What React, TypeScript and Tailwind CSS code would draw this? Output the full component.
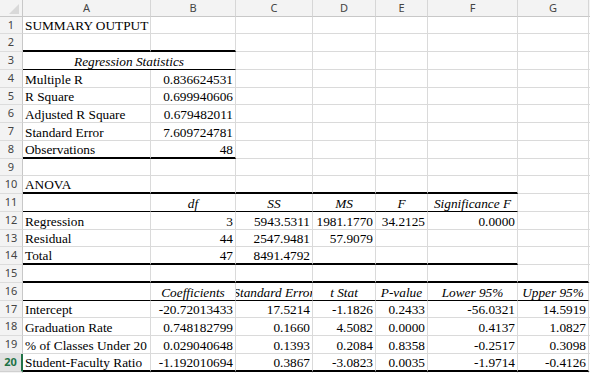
import React from "react";

type Align = "l" | "r" | "c";
type CellSpec = { t?: string; a?: Align; i?: boolean; span?: number };

const COLS = ["A", "B", "C", "D", "E", "F", "G"];

const lbl = (t: string): CellSpec => ({ t, a: "l" });
const num = (t: string): CellSpec => ({ t, a: "r" });
const hdr = (t: string): CellSpec => ({ t, a: "c", i: true });

// Cell contents per worksheet row (columns A..G)
const sheet: Record<number, CellSpec[]> = {
  1: [lbl("SUMMARY OUTPUT")],
  3: [{ t: "Regression Statistics", a: "c", i: true, span: 2 }],
  4: [lbl("Multiple R"), num("0.836624531")],
  5: [lbl("R Square"), num("0.699940606")],
  6: [lbl("Adjusted R Square"), num("0.679482011")],
  7: [lbl("Standard Error"), num("7.609724781")],
  8: [lbl("Observations"), num("48")],
  10: [lbl("ANOVA")],
  11: [{}, hdr("df"), hdr("SS"), hdr("MS"), hdr("F"), hdr("Significance F")],
  12: [lbl("Regression"), num("3"), num("5943.5311"), num("1981.1770"), num("34.2125"), num("0.0000")],
  13: [lbl("Residual"), num("44"), num("2547.9481"), num("57.9079")],
  14: [lbl("Total"), num("47"), num("8491.4792")],
  16: [{}, hdr("Coefficients"), hdr("Standard Error"), hdr("t Stat"), hdr("P-value"), hdr("Lower 95%"), hdr("Upper 95%")],
  17: [lbl("Intercept"), num("-20.72013433"), num("17.5214"), num("-1.1826"), num("0.2433"), num("-56.0321"), num("14.5919")],
  18: [lbl("Graduation Rate"), num("0.748182799"), num("0.1660"), num("4.5082"), num("0.0000"), num("0.4137"), num("1.0827")],
  19: [lbl("% of Classes Under 20"), num("0.029040648"), num("0.1393"), num("0.2084"), num("0.8358"), num("-0.2517"), num("0.3098")],
  20: [lbl("Student-Faculty Ratio"), num("-1.192010694"), num("0.3867"), num("-3.0823"), num("0.0035"), num("-1.9714"), num("-0.4126")],
};

// Bottom edge borders: [kind, number of columns from A]
const edges: Record<number, ["m" | "t", number]> = {
  2: ["m", 2],
  3: ["t", 2],
  8: ["m", 2],
  10: ["m", 6],
  11: ["t", 6],
  14: ["m", 6],
  15: ["m", 7],
  16: ["t", 7],
  20: ["m", 7],
};

function expand(row: number): CellSpec[] {
  const given = sheet[row] ?? [];
  const out: CellSpec[] = [];
  let used = 0;
  for (const c of given) {
    out.push(c);
    used += c.span ?? 1;
  }
  while (used < 7) {
    out.push({});
    used += 1;
  }
  return out;
}

function Cell({ spec, row, startCol }: { spec: CellSpec; row: number; startCol: number }) {
  const edge = edges[row];
  const kind = edge && startCol < edge[1] ? edge[0] : null;
  const bottom =
    kind === "m"
      ? "border-b-2 border-b-black"
      : kind === "t"
      ? "border-b border-b-black"
      : "border-b border-b-[#dadada]";
  const span = spec.span === 2 ? "col-span-2" : "";
  const justify =
    spec.a === "r" ? "justify-end pr-[2px]" : spec.a === "c" ? "justify-center" : "justify-start pl-[2px]";
  return (
    <div
      className={`${span} ${bottom} border-r border-r-[#dadada] bg-white flex items-end overflow-hidden whitespace-nowrap ${justify}`}
    >
      {spec.t ? (
        <span className={`shrink-0 leading-[15px] text-[13.3px] text-black ${spec.i ? "italic" : ""}`}>{spec.t}</span>
      ) : null}
    </div>
  );
}

export default function App() {
  const rows = Array.from({ length: 21 }, (_, k) => k + 1);
  return (
    <div className="w-[590px] h-[373px] overflow-hidden bg-white font-['Liberation_Serif',serif]">
      <div className="grid grid-cols-[23px_128px_85px_77px_63px_52px_90px_71px_1fr] grid-rows-[17px_17px_18px_18px_18px_17px_18px_18px_18px_17px_18px_18px_18px_17px_18px_18px_18px_17px_18px_18px_18px_18px]">
        {/* corner */}
        <div className="bg-[#f3f3f3] border-r border-r-[#c8c8c8] border-b border-b-[#c8c8c8] flex items-start justify-start">
          <svg width="22" height="16" viewBox="0 0 22 16">
            <polygon points="19,4 19,14 9,14" fill="#d9d9d9" />
          </svg>
        </div>
        {/* column letters */}
        {COLS.map((c) => (
          <div
            key={c}
            className="bg-[#f3f3f3] border-r border-r-[#d6d6d6] border-b border-b-[#c8c8c8] flex items-center justify-center font-['Noto_Sans',sans-serif] text-[11px] text-[#444]"
          >
            {c}
          </div>
        ))}
        <div className="bg-[#f3f3f3] border-b border-b-[#c8c8c8]" />

        {rows.map((r) => {
          const cells = expand(r);
          let col = 0;
          const active = r === 20;
          return (
            <React.Fragment key={r}>
              <div
                className={
                  active
                    ? "bg-[#e1e1e1] border-r-2 border-r-[#217346] border-b border-b-[#d0d0d0] flex items-center justify-center font-['Noto_Sans',sans-serif] text-[11px] font-bold text-[#217346]"
                    : "bg-[#f3f3f3] border-r border-r-[#c8c8c8] border-b border-b-[#dcdcdc] flex items-center justify-center font-['Noto_Sans',sans-serif] text-[11px] text-[#444]"
                }
              >
                {r <= 20 ? r : null}
              </div>
              {cells.map((spec, idx) => {
                const start = col;
                col += spec.span ?? 1;
                return <Cell key={idx} spec={spec} row={r} startCol={start} />;
              })}
              <div className="bg-white border-b border-b-[#dadada]" />
            </React.Fragment>
          );
        })}
      </div>
    </div>
  );
}
